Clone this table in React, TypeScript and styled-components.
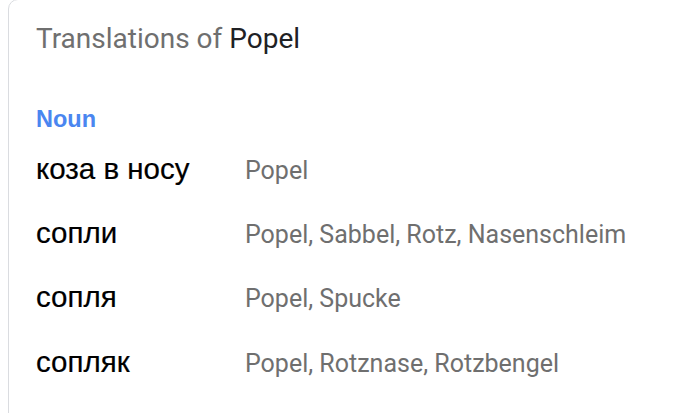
import { createGlobalStyle, styled } from "styled-components";

const GlobalStyle = createGlobalStyle`
  html, body {
    margin: 0;
    padding: 0;
    background: #fff;
    font-family: Roboto, "Liberation Sans", Arial, sans-serif;
  }
`;

const Page = styled.div`
  width: 680px;
  height: 413px;
  overflow: hidden;
  padding-left: 8px;
  box-sizing: border-box;
`;

const Card = styled.section`
  width: 760px;
  height: 440px;
  margin-top: -1px;
  border: 1px solid #dadce0;
  border-radius: 10px;
  box-sizing: border-box;
  padding: 19px 0 0 27px;
`;

const Title = styled.h2`
  margin: 0;
  font-size: 28px;
  font-weight: 400;
  line-height: 40px;
  color: #6f6f6f;
`;

const Word = styled.span`
  color: #202124;
`;

const PartOfSpeech = styled.div`
  margin-top: 46px;
  font-family: "Liberation Sans", Arial, sans-serif;
  font-size: 23.5px;
  font-weight: 700;
  color: #4a86f0;
  line-height: 28px;
`;

const Table = styled.div`
  display: grid;
  grid-template-columns: 209px 1fr;
  grid-auto-rows: 64.2px;
  align-items: baseline;
  margin-top: 12px;
`;

const Source = styled.div`
  font-family: "Liberation Sans", Arial, sans-serif;
  font-size: 29.5px;
  color: #000;
  line-height: 48px;
  -webkit-text-stroke: 0.2px #000;
`;

const Targets = styled.div`
  font-size: 25px;
  color: #6f6f6f;
  line-height: 48px;
`;

const rows = [
  { word: "коза в носу", list: "Popel" },
  { word: "сопли", list: "Popel, Sabbel, Rotz, Nasenschleim" },
  { word: "сопля", list: "Popel, Spucke" },
  { word: "сопляк", list: "Popel, Rotznase, Rotzbengel" },
];

export default function App() {
  return (
    <Page>
      <GlobalStyle />
      <Card>
        <Title>
          Translations of <Word>Popel</Word>
        </Title>
        <PartOfSpeech>Noun</PartOfSpeech>
        <Table>
          {rows.map((r) => (
            <>
              <Source key={r.word}>{r.word}</Source>
              <Targets key={r.word + "-t"}>{r.list}</Targets>
            </>
          ))}
        </Table>
      </Card>
    </Page>
  );
}
